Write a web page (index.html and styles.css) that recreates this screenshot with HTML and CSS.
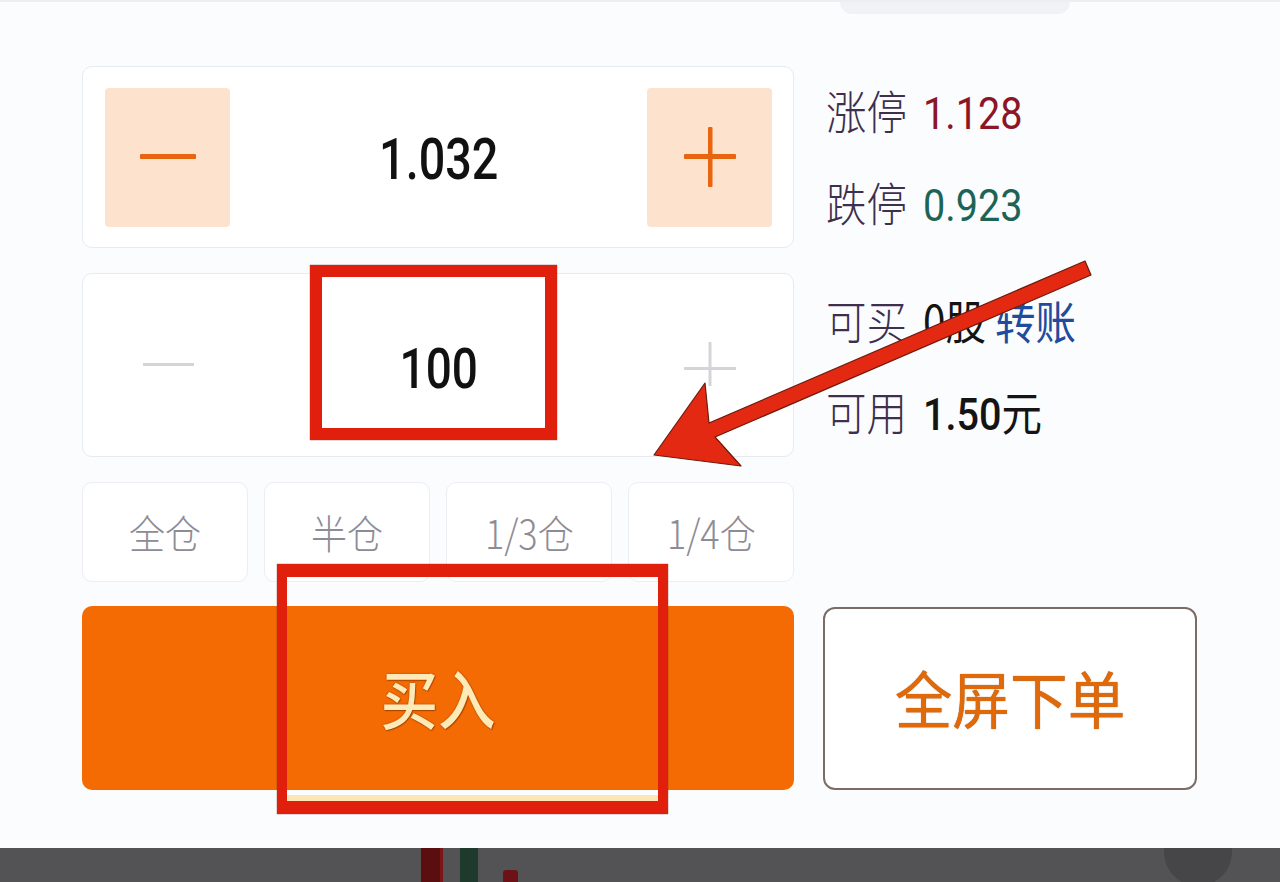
FILE: index.html
```html
<!DOCTYPE html>
<html lang="zh-CN">
<head>
<meta charset="utf-8">
<title>买入</title>
<link rel="stylesheet" href="styles.css">
</head>
<body>
<div class="page">
  <div class="top-pill"></div>

  <main class="trade">
    <div class="left">
      <div class="stepper price">
        <div class="step-btn filled">
          <svg width="60" height="10" viewBox="0 0 60 10"><rect x="2" y="2" width="56" height="5" rx="1" fill="#e8640f"/></svg>
        </div>
        <div class="step-value"><span class="num big">1.032</span></div>
        <div class="step-btn filled">
          <svg width="60" height="64" viewBox="0 0 60 64"><rect x="4" y="29" width="52" height="5" rx="1" fill="#e8640f"/><rect x="28" y="2" width="4.5" height="60" rx="1" fill="#e8640f"/></svg>
        </div>
      </div>

      <div class="stepper qty">
        <div class="step-btn">
          <svg width="60" height="10" viewBox="0 0 60 10"><rect x="5" y="3" width="51" height="3" fill="#d3d5d9"/></svg>
        </div>
        <div class="step-value"><span class="num big">100</span></div>
        <div class="step-btn">
          <svg width="60" height="50" viewBox="0 0 60 50"><rect x="4" y="27" width="52" height="3" fill="#d3d5d9"/><rect x="28.5" y="2" width="3" height="44" fill="#d3d5d9"/></svg>
        </div>
      </div>

      <div class="ratios">
        <button class="ratio"><span class="ratio-text">全仓</span></button>
        <button class="ratio"><span class="ratio-text">半仓</span></button>
        <button class="ratio"><span class="ratio-text">1/3仓</span></button>
        <button class="ratio"><span class="ratio-text">1/4仓</span></button>
      </div>
    </div>

    <div class="info">
      <div class="info-row r1"><span class="squish"><span class="label">涨停</span> <span class="num up">1.128</span></span></div>
      <div class="info-row r2"><span class="squish"><span class="label">跌停</span> <span class="num down">0.923</span></span></div>
      <div class="info-row r3"><span class="squish"><span class="label">可买</span> <span class="dark">0股</span> <span class="link">转账</span></span></div>
      <div class="info-row r4"><span class="squish"><span class="label">可用</span> <span class="num dark strong">1.50</span><span class="dark">元</span></span></div>
    </div>
  </main>

  <div class="actions">
    <button class="buy"><span class="buy-text">买入</span></button>
    <button class="fullscreen"><span class="fs-text">全屏下单</span></button>
  </div>

  <footer class="chart-bar">
    <span class="candle c1"></span>
    <span class="candle c2"></span>
    <span class="candle c3"></span>
    <span class="candle c4"></span>
    <span class="fab"></span>
  </footer>

  <div class="mark mark-qty"></div>
  <div class="mark mark-buy"><span class="mark-line"></span></div>

  <svg class="arrow" width="1280" height="882" viewBox="0 0 1280 882">
    <polygon points="1085,259 709,421 705,381 654,453 741,464 715,435 1091,273" fill="#e42912" stroke="#6e1a0c" stroke-width="1.2" stroke-linejoin="round"/>
  </svg>
</div>
</body>
</html>
```

FILE: styles.css
```css
* { box-sizing: border-box; }

html, body {
  margin: 0;
  padding: 0;
  background: #fbfcfe;
}

.page {
  position: relative;
  width: 1280px;
  height: 882px;
  overflow: hidden;
  display: flex;
  flex-direction: column;
  background: #fbfcfe;
  font-family: "Noto Sans CJK SC", "Noto Sans", sans-serif;
  border-top: 2px solid #eeeef0;
}

.top-pill {
  margin-left: 840px;
  width: 230px;
  height: 12px;
  background: #f1f2f5;
  border-radius: 0 0 14px 14px;
  flex: none;
}

.trade {
  display: flex;
  gap: 29px;
  padding-left: 82px;
  margin-top: 52px;
  flex: none;
}

.left {
  width: 712px;
  display: flex;
  flex-direction: column;
  gap: 25px;
}

.stepper {
  display: flex;
  align-items: center;
  justify-content: space-between;
  padding: 0 21px 0 22px;
  background: #ffffff;
  border: 1px solid #e7eaee;
  border-radius: 10px;
}

.stepper.price { height: 182px; }
.stepper.qty { height: 184px; }

.step-btn {
  width: 125px;
  height: 139px;
  display: flex;
  align-items: center;
  justify-content: center;
  border-radius: 4px;
}

.step-btn.filled {
  background: #fde3cd;
}

.step-value {
  flex: 1;
  text-align: center;
}

.num {
  font-family: "Roboto", "Noto Sans", sans-serif;
  font-weight: 400;
}

.num.big {
  display: inline-block;
  font-size: 57px;
  font-weight: 500;
  color: #111111;
  transform: scaleX(0.82);
  line-height: 1;
}

.qty .num.big {
  font-size: 56px;
  margin-top: 8px;
}

.price .num.big {
  margin-top: 4px;
}

.ratios {
  display: flex;
  gap: 16px;
  height: 100px;
}

.ratio {
  flex: 1;
  background: #ffffff;
  border: 1px solid #eceef2;
  border-radius: 10px;
  display: flex;
  align-items: center;
  justify-content: center;
  padding: 0;
  font-family: "Noto Sans CJK SC", sans-serif;
}

.ratio-text {
  display: inline-block;
  font-size: 40px;
  font-weight: 300;
  color: #8d8c96;
  transform: scaleX(0.9);
  line-height: 1;
}

.info {
  display: flex;
  flex-direction: column;
  padding-top: 13px;
  padding-left: 3px;
}

.info-row {
  height: 60px;
  line-height: 60px;
  font-size: 46px;
  white-space: nowrap;
}

.info-row.r2 { margin-top: 32px; }
.info-row.r3 { margin-top: 58px; }
.info-row.r4 { margin-top: 31px; }

.squish {
  display: inline-block;
  transform: scaleX(0.88);
  transform-origin: left center;
}

.label {
  font-weight: 300;
  color: #3d2f4e;
  margin-right: 8px;
}

.info .num {
  font-size: 45px;
}

.info .num.strong {
  font-weight: 500;
}

.up { color: #8c1526; }
.down { color: #1e6456; }
.dark { color: #141414; }
.link { color: #1f4c9c; }

.actions {
  display: flex;
  gap: 29px;
  padding-left: 82px;
  margin-top: 24px;
  flex: none;
}

.buy {
  width: 712px;
  height: 184px;
  background: #f56b03;
  border: none;
  border-radius: 10px;
  display: flex;
  align-items: center;
  justify-content: center;
  padding: 0;
  font-family: "Noto Sans CJK SC", sans-serif;
}

.buy-text {
  display: inline-block;
  font-size: 64px;
  font-weight: 500;
  color: #fdeab6;
  transform: scaleX(0.9);
  text-shadow: 0 0 2px #9b3a00, 1px 1px 1px #b04800;
  line-height: 1;
  margin-top: -4px;
}

.fullscreen {
  width: 374px;
  height: 183px;
  margin-top: 1px;
  background: #ffffff;
  border: 2px solid #7b6d66;
  border-radius: 12px;
  display: flex;
  align-items: center;
  justify-content: center;
  padding: 0;
  font-family: "Noto Sans CJK SC", sans-serif;
}

.fs-text {
  display: inline-block;
  font-size: 62px;
  color: #e06a0a;
  transform: scaleX(0.93);
  text-shadow: 0 0 1px #8a3a06;
  line-height: 1;
  margin-top: -4px;
}

.chart-bar {
  position: relative;
  margin-top: auto;
  height: 34px;
  background: #535355;
  flex: none;
  overflow: hidden;
}

.candle {
  position: absolute;
  top: 0;
  height: 34px;
}

.candle.c1 { left: 421px; width: 20px; background: #5a0e10; }
.candle.c2 { left: 440px; width: 3px; background: #7a1518; }
.candle.c3 { left: 460px; width: 18px; background: #1d3a2c; }
.candle.c4 { left: 503px; top: 22px; width: 15px; height: 12px; background: #6c1216; border-radius: 3px 3px 0 0; }

.fab {
  position: absolute;
  left: 1164px;
  top: -30px;
  width: 68px;
  height: 68px;
  border-radius: 50%;
  background: #464648;
}

.mark {
  position: absolute;
  border: 12px solid #e0200c;
  box-shadow: 0 0 1px #7a1a0c;
}

.mark-qty {
  left: 310px;
  top: 263px;
  width: 247px;
  height: 175px;
}

.mark-buy {
  left: 277px;
  top: 562px;
  width: 391px;
  height: 250px;
  border-width: 13px 10px 13px 10px;
}

.mark-line {
  position: absolute;
  left: 0;
  right: 0;
  bottom: 0;
  height: 6px;
  background: #fce6b8;
}

.arrow {
  position: absolute;
  left: 0;
  top: 0;
  pointer-events: none;
}
```
